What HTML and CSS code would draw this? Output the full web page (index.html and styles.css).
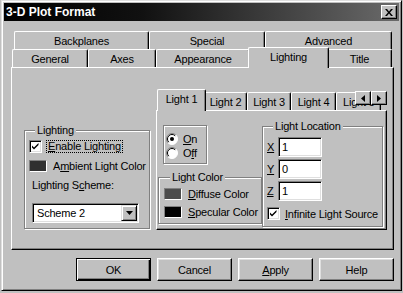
FILE: index.html
```html
<!DOCTYPE html>
<html>
<head>
<meta charset="utf-8">
<title>3-D Plot Format</title>
<link rel="stylesheet" href="styles.css">
</head>
<body>
<div class="dialog">
  <div class="titlebar">
    <span class="title">3-D Plot Format</span>
    <span class="close"><svg width="8" height="7" viewBox="0 0 8 7"><path d="M0 0h2l2 2.4L6 0h2L5 3.5 8 7H6L4 4.6 2 7H0l3-3.5z" fill="#000"/></svg></span>
  </div>
  <div class="tabs">
    <div class="tabrow back">
      <div class="tab w-backplanes">Backplanes</div>
      <div class="tab w-special">Special</div>
      <div class="tab w-advanced">Advanced</div>
    </div>
    <div class="tabrow front">
      <div class="tab w-general">General</div>
      <div class="tab w-axes">Axes</div>
      <div class="tab w-appearance">Appearance</div>
      <div class="tab w-lighting sel">Lighting</div>
      <div class="tab w-title">Title</div>
    </div>
  </div>
  <div class="panel">
    <div class="group g-lighting">
      <span class="legend">Lighting</span>
      <div class="row check-row">
        <span class="checkbox"><svg width="9" height="9" viewBox="0 0 9 9"><path d="M1 3.5l2 2 4.5-4.5v2L3 7.5l-2-2z" fill="#000"/></svg></span>
        <span class="focus"><u>E</u>nable Lighting</span>
      </div>
      <div class="row swatch-row">
        <span class="swatch ambient"></span>
        <span class="swatch-label">A<u>m</u>bient Light Color</span>
      </div>
      <div class="scheme-label">Lighting S<u>c</u>heme:</div>
      <div class="select">
        <span class="select-value">Scheme 2</span>
        <span class="drop"><svg width="7" height="4" viewBox="0 0 7 4"><path d="M0 0h7L3.5 4z" fill="#000"/></svg></span>
      </div>
    </div>
    <div class="lights">
      <div class="ltabs">
        <div class="ltab sel lw1">Light 1</div>
        <div class="ltab lw2">Light 2</div>
        <div class="ltab lw3">Light 3</div>
        <div class="ltab lw4">Light 4</div>
        <div class="ltab lw5">Light 5</div>
        <div class="arrows">
          <span class="arrow"><svg width="4" height="7" viewBox="0 0 4 7"><path d="M4 0v7L0 3.5z" fill="#000"/></svg></span>
          <span class="arrow"><svg width="4" height="7" viewBox="0 0 4 7"><path d="M0 0v7l4-3.5z" fill="#000"/></svg></span>
        </div>
      </div>
      <div class="lpanel">
        <div class="lcol">
          <div class="onoff">
            <div class="radio-row">
              <svg class="radio" width="12" height="12" viewBox="0 0 12 12"><circle cx="6" cy="6" r="5.5" fill="#fff"/><path d="M2.1 9.9A5.5 5.5 0 0 1 9.9 2.1" stroke="#808080" fill="none"/><path d="M2.8 9.2A4.5 4.5 0 0 1 9.2 2.8" stroke="#000" fill="none"/><path d="M2.1 9.9A5.5 5.5 0 0 0 9.9 2.1" stroke="#fff" fill="none"/><circle cx="6" cy="6" r="2" fill="#000"/></svg>
              <span><u>O</u>n</span>
            </div>
            <div class="radio-row">
              <svg class="radio" width="12" height="12" viewBox="0 0 12 12"><circle cx="6" cy="6" r="5.5" fill="#fff"/><path d="M2.1 9.9A5.5 5.5 0 0 1 9.9 2.1" stroke="#808080" fill="none"/><path d="M2.8 9.2A4.5 4.5 0 0 1 9.2 2.8" stroke="#000" fill="none"/><path d="M2.1 9.9A5.5 5.5 0 0 0 9.9 2.1" stroke="#fff" fill="none"/></svg>
              <span>O<u>f</u>f</span>
            </div>
          </div>
          <div class="group g-color">
            <span class="legend">Light Color</span>
            <div class="row color-row first">
              <span class="swatch diffuse"></span>
              <span class="swatch-label"><u>D</u>iffuse Color</span>
            </div>
            <div class="row color-row">
              <span class="swatch specular"></span>
              <span class="swatch-label"><u>S</u>pecular Color</span>
            </div>
          </div>
        </div>
        <div class="group g-location">
          <span class="legend">Light Location</span>
          <div class="field first"><span class="axis"><u>X</u></span><span class="textbox">1</span></div>
          <div class="field"><span class="axis"><u>Y</u></span><span class="textbox">0</span></div>
          <div class="field"><span class="axis"><u>Z</u></span><span class="textbox">1</span></div>
          <div class="row infinite-row">
            <span class="checkbox"><svg width="9" height="9" viewBox="0 0 9 9"><path d="M1 3.5l2 2 4.5-4.5v2L3 7.5l-2-2z" fill="#000"/></svg></span>
            <span class="infinite-label"><u>I</u>nfinite Light Source</span>
          </div>
        </div>
      </div>
    </div>
  </div>
  <div class="buttons">
    <span class="btn default">OK</span>
    <span class="btn">Cancel</span>
    <span class="btn"><u>A</u>pply</span>
    <span class="btn">Help</span>
  </div>
</div>
</body>
</html>
```
FILE: styles.css
```css
* { box-sizing: border-box; }
html, body { margin: 0; padding: 0; background: #c0c0c0; }
body {
  width: 403px;
  height: 293px;
  overflow: hidden;
  font: 11px "Liberation Sans", Arial, sans-serif;
  letter-spacing: -0.2px;
  color: #000;
}
u { text-decoration: underline; text-underline-offset: 1px; }

.dialog {
  margin-left: 1px;
  width: 401px;
  height: 291px;
  border: 1px solid;
  border-color: #dfdfdf #000 #000 #dfdfdf;
  box-shadow: inset 1px 1px #fff, inset -1px -1px #808080;
  padding: 2px;
  display: flex;
  flex-direction: column;
}

.titlebar {
  height: 18px;
  flex: none;
  display: flex;
  align-items: center;
  justify-content: space-between;
  padding-left: 2px;
  background: linear-gradient(90deg, #000 0%, #111 35%, #6a6a6a 100%);
}
.title { color: #fff; font-weight: bold; font-size: 12px; line-height: 14px; letter-spacing: 0; }
.close {
  width: 16px;
  height: 14px;
  margin-right: 2px;
  display: flex;
  align-items: center;
  justify-content: center;
  background: #c0c0c0;
  border: 1px solid;
  border-color: #fff #000 #000 #fff;
  box-shadow: inset -1px -1px #808080;
}

.tabs { margin-top: 10px; flex: none; }
.tabrow { display: flex; height: 18px; align-items: flex-start; }
.back { padding-left: 10px; }
.front { padding-left: 8px; }
.tab {
  flex: none;
  height: 18px;
  display: flex;
  align-items: center;
  justify-content: center;
  padding-top: 1px;
  background: #c0c0c0;
  border-top: 1px solid #fff;
  border-left: 1px solid #fff;
  border-right: 1px solid #000;
  box-shadow: inset -1px 0 #808080;
  border-radius: 2px 2px 0 0;
}
.tab.sel {
  height: 21px;
  margin: -2px -2px -1px;
  padding: 0 0 2px;
  position: relative;
  z-index: 1;
}
.w-backplanes { width: 135px; }
.w-special { width: 116px; }
.w-advanced { width: 127px; }
.w-general { width: 76px; }
.w-axes { width: 68px; }
.w-appearance { width: 94px; }
.w-lighting { width: 81px; }
.w-title { width: 65px; }

.panel {
  flex: none;
  margin-left: 7px;
  width: 383px;
  height: 183px;
  border: 1px solid;
  border-color: #fff #000 #000 #fff;
  box-shadow: inset -1px -1px #808080;
  padding: 21px 0 0 12px;
  display: flex;
  align-items: flex-start;
}

.group {
  flex: none;
  border: 1px solid #808080;
  box-shadow: inset 1px 1px #fff, 1px 1px #fff;
}
.legend {
  display: block;
  width: max-content;
  margin: -7px 0 0 6px;
  padding: 0 2px;
  line-height: 13px;
  background: #c0c0c0;
}
.row { display: flex; align-items: center; }

.g-lighting {
  margin-top: 41px;
  width: 126px;
  height: 99px;
  padding-left: 4px;
}
.check-row { margin-top: 3px; height: 13px; }
.checkbox {
  flex: none;
  width: 13px;
  height: 13px;
  background: #fff;
  border: 1px solid;
  border-color: #808080 #fff #fff #808080;
  box-shadow: inset 1px 1px #000, inset -1px -1px #dfdfdf;
  display: flex;
  align-items: center;
  justify-content: center;
}
.focus {
  margin-left: 4px;
  border: 1px dotted #000;
  padding: 0 1px;
  line-height: 11px;
  white-space: nowrap;
}
.swatch-row { margin-top: 7px; height: 12px; }
.swatch {
  flex: none;
  width: 18px;
  height: 12px;
  border: 1px solid;
  border-color: #808080 #fff #fff #808080;
}
.ambient { background: #303030; }
.diffuse { background: #4d4d4d; }
.specular { background: #000; }
.swatch-label { margin-left: 6px; white-space: nowrap; line-height: 12px; }
.scheme-label { margin: 7px 0 0 3px; line-height: 13px; white-space: nowrap; }
.select {
  margin: 11px 0 0 3px;
  width: 107px;
  height: 20px;
  background: #fff;
  border: 1px solid;
  border-color: #808080 #fff #fff #808080;
  box-shadow: inset 1px 1px #000, inset -1px -1px #dfdfdf;
  padding: 2px 2px 2px 4px;
  display: flex;
  align-items: center;
  justify-content: space-between;
}
.select-value { line-height: 14px; }
.drop {
  width: 16px;
  height: 16px;
  margin-right: -1px;
  background: #c0c0c0;
  border: 1px solid;
  border-color: #dfdfdf #000 #000 #dfdfdf;
  box-shadow: inset 1px 1px #fff, inset -1px -1px #808080;
  display: flex;
  align-items: center;
  justify-content: center;
}

.lights { flex: none; width: 231px; margin-left: 6px; }
.ltabs {
  position: relative;
  height: 21px;
  display: flex;
  align-items: flex-end;
  padding-left: 3px;
}
.ltab {
  flex: none;
  height: 18px;
  display: flex;
  align-items: center;
  justify-content: center;
  padding-top: 1px;
  white-space: nowrap;
  overflow: hidden;
  background: #c0c0c0;
  border-top: 1px solid #fff;
  border-left: 1px solid #fff;
  border-right: 1px solid #000;
  box-shadow: inset -1px 0 #808080;
  border-radius: 2px 2px 0 0;
}
.ltab.sel {
  height: 22px;
  margin: 0 -2px -1px;
  padding: 0 0 3px;
  position: relative;
  z-index: 1;
}
.lw1 { width: 49px; }
.lw2 { width: 43px; }
.lw3 { width: 44px; }
.lw4 { width: 45px; }
.lw5 { width: 45px; justify-content: flex-start; padding-left: 6px; }
.arrows {
  position: absolute;
  right: 0;
  top: 2px;
  z-index: 2;
  display: flex;
}
.arrow {
  width: 16px;
  height: 14px;
  background: #c0c0c0;
  border: 1px solid;
  border-color: #fff #000 #000 #fff;
  box-shadow: inset -1px -1px #808080;
  display: flex;
  align-items: center;
  justify-content: center;
}

.lpanel {
  width: 231px;
  height: 120px;
  border: 1px solid;
  border-color: #fff #000 #000 #fff;
  box-shadow: inset -1px -1px #808080;
  padding-left: 1px;
  display: flex;
  align-items: flex-start;
}
.lcol { flex: none; width: 104px; }
.onoff {
  margin: 14px 0 0 5px;
  width: 44px;
  height: 39px;
  border: 1px solid #808080;
  box-shadow: inset 1px 1px #fff, 1px 1px #fff;
  padding: 7px 0 0 2px;
}
.radio-row { display: flex; align-items: center; height: 12px; }
.radio-row + .radio-row { margin-top: 2px; }
.radio { flex: none; margin-right: 5px; }
.g-color {
  margin-top: 13px;
  width: 104px;
  height: 47px;
  padding-left: 5px;
}
.color-row { height: 12px; margin-top: 6px; }
.color-row.first { margin-top: 4px; }

.g-location {
  margin-top: 15px;
  width: 121px;
  height: 101px;
  padding-left: 4px;
}
.field { display: flex; align-items: center; height: 20px; margin-top: 2px; }
.field.first { margin-top: 4px; }
.axis { width: 11px; flex: none; }
.textbox {
  width: 44px;
  height: 20px;
  background: #fff;
  border: 1px solid;
  border-color: #808080 #fff #fff #808080;
  box-shadow: inset 1px 1px #000, inset -1px -1px #dfdfdf;
  padding-left: 3px;
  line-height: 18px;
}
.infinite-row { margin-top: 6px; height: 13px; }
.infinite-label { margin-left: 5px; white-space: nowrap; }

.buttons {
  flex: none;
  margin-top: 8px;
  padding-left: 72px;
  display: flex;
  gap: 6px;
}
.btn {
  width: 75px;
  height: 23px;
  display: flex;
  align-items: center;
  justify-content: center;
  background: #c0c0c0;
  border: 1px solid;
  border-color: #fff #000 #000 #fff;
  box-shadow: inset -1px -1px #808080, inset 1px 1px #dfdfdf;
}
.btn.default {
  border-color: #000;
  box-shadow: inset 1px 1px #fff, inset -1px -1px #000, inset -2px -2px #808080;
}
```
